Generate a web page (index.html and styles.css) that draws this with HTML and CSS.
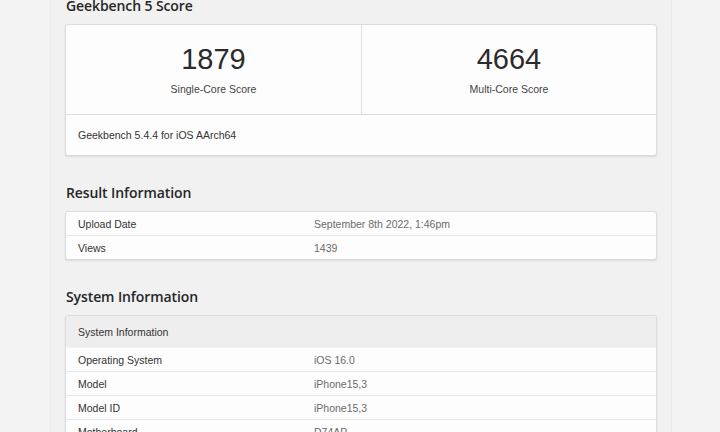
FILE: index.html
```html
<!DOCTYPE html>
<html lang="en">
<head>
    <meta charset="UTF-8">
    <meta name="viewport" content="width=device-width, initial-scale=1.0">
    <title>Geekbench 5 Result</title>
    <link rel="stylesheet" href="styles.css">
</head>
<body>

<div class="page">
    <h2 class="first">Geekbench 5 Score</h2>
    <div class="card">
        <div class="scores">
            <div class="score">
                <div class="score-value">1879</div>
                <div class="score-name">Single-Core Score</div>
            </div>
            <div class="score">
                <div class="score-value">4664</div>
                <div class="score-name">Multi-Core Score</div>
            </div>
        </div>
        <div class="card-footer">Geekbench 5.4.4 for iOS AArch64</div>
    </div>

    <h2>Result Information</h2>
    <div class="card">
        <table>
            <colgroup><col class="label-col"><col></colgroup>
            <tbody>
                <tr><td class="name">Upload Date</td><td class="value">September 8th 2022, 1:46pm</td></tr>
                <tr><td class="name">Views</td><td class="value">1439</td></tr>
            </tbody>
        </table>
    </div>

    <h2>System Information</h2>
    <div class="card">
        <table>
            <colgroup><col class="label-col"><col></colgroup>
            <thead>
                <tr><th colspan="2">System Information</th></tr>
            </thead>
            <tbody>
                <tr><td class="name">Operating System</td><td class="value">iOS 16.0</td></tr>
                <tr><td class="name">Model</td><td class="value">iPhone15,3</td></tr>
                <tr><td class="name">Model ID</td><td class="value">iPhone15,3</td></tr>
                <tr><td class="name">Motherboard</td><td class="value">D74AP</td></tr>
            </tbody>
        </table>
    </div>
</div>

</body>
</html>
```

FILE: styles.css
```css
body {
    font-family: "Liberation Sans", Arial, sans-serif;
    background: #f3f3f3;
    margin: 0;
    padding: 0;
    color: #333;
}
.page {
    width: 592px;
    margin-left: 50px;
    padding: 0 14px 0 14px;
    background: #f1f1f1;
    border-left: 1px solid #ebebeb;
    border-right: 1px solid #ebebeb;
    min-height: 460px;
}
h2 {
    font-family: "Open Sans", "Liberation Sans", sans-serif;
    font-weight: 600;
    font-size: 14px;
    line-height: 20px;
    color: #262626;
    margin: 27px 0 8px 1px;
    letter-spacing: -0.1px;
}
h2.first {
    margin-top: -4px;
}
.card {
    background: #fdfdfd;
    border: 1px solid #dcdcdc;
    border-radius: 3px;
    box-shadow: 0 1px 2px rgba(0, 0, 0, 0.1);
    overflow: hidden;
}
.scores {
    display: grid;
    grid-template-columns: 1fr 1fr;
    border-bottom: 1px solid #dedede;
}
.score {
    text-align: center;
    padding: 17px 0 18px;
}
.score + .score {
    border-left: 1px solid #dedede;
}
.score-value {
    font-size: 29px;
    line-height: 34px;
    color: #2b2b2b;
}
.score-name {
    font-size: 10.5px;
    line-height: 14px;
    margin-top: 6px;
    color: #444;
}
.card-footer {
    font-size: 10.5px;
    line-height: 14px;
    padding: 13px 12px;
    color: #333;
}
table {
    width: 100%;
    border-collapse: collapse;
    font-size: 10.5px;
}
.label-col {
    width: 40%;
}
th {
    background: #eeeeee;
    text-align: left;
    font-weight: normal;
    height: 31px;
    padding: 0 12px;
    color: #333;
}
td {
    height: 23px;
    padding: 0 12px;
    line-height: 14px;
}
tbody tr + tr td {
    border-top: 1px solid #e6e6e6;
}
thead + tbody tr:first-child td {
    border-top: 1px solid #f3f3f3;
}
.name {
    color: #333;
}
.value {
    color: #6b6b6b;
}
```
